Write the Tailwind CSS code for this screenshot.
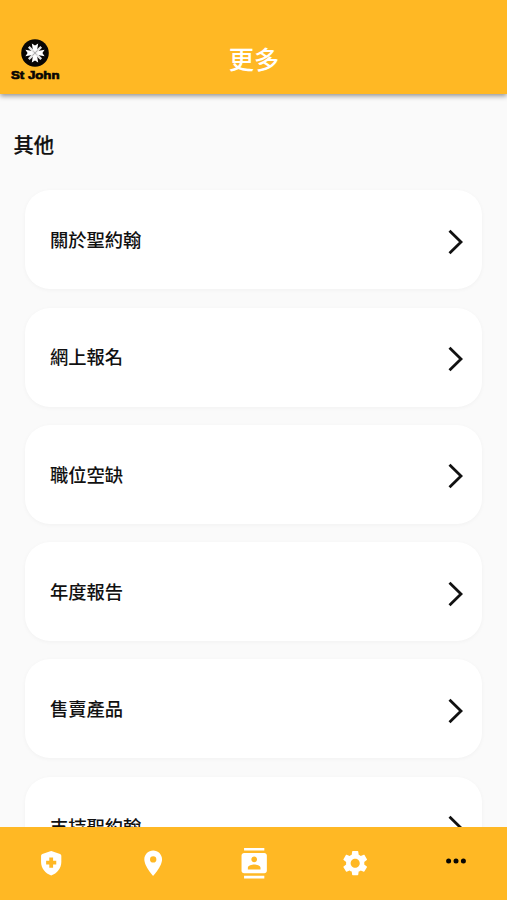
<!DOCTYPE html>
<html lang="zh-Hant">
<head>
<meta charset="utf-8">
<title>更多</title>
<script src="https://cdn.jsdelivr.net/npm/@tailwindcss/browser@4"></script>
</head>
<body class="h-[900px] w-[507px] overflow-hidden bg-[#fafafa] font-['Noto_Sans_CJK_TC',sans-serif] text-[#111]">
<div class="flex h-full flex-col">
  <header class="relative z-10 grid h-[94px] shrink-0 grid-cols-[70px_1fr_70px] bg-[#ffb824] pt-[37px] shadow-[0_2px_5px_rgba(0,0,0,0.42)]">
    <div class="flex flex-col items-center">
      <svg class="mt-0.5 size-7" viewBox="0 0 28 28">
        <circle cx="14" cy="14" r="13.8" fill="#080604"/>
        <g fill="#fff">
          <path id="arm" d="M12.4 14 10.8 4.4 14 6.6 17.2 4.4 15.6 14Z"/>
          <use href="#arm" transform="rotate(90 14 14)"/>
          <use href="#arm" transform="rotate(180 14 14)"/>
          <use href="#arm" transform="rotate(270 14 14)"/>
        </g>
        <path d="M7.8 7.8 20.2 20.2M20.2 7.8 7.8 20.2" stroke="#e6e6e6" stroke-width="2.4"/>
        <path d="M11.5 16.5l5-5M12.5 12.5l3 3" stroke="#999" stroke-width=".7"/>
      </svg>
      <svg class="h-[13px] w-[52px]" viewBox="0 0 52 13"><text x="2" y="11.8" font-family="Liberation Sans" font-weight="700" font-size="11.5" textLength="48.5" lengthAdjust="spacingAndGlyphs" fill="#080604" stroke="#080604" stroke-width=".7">St John</text></svg>
    </div>
    <h1 class="pl-px text-center text-[25.3px] leading-[42px] font-medium text-white">更多</h1>
  </header>
  <main class="flex min-h-0 flex-1 flex-col overflow-hidden">
    <h2 class="mt-[30px] ml-[13.5px] h-[66.3px] shrink-0 text-[20.3px] leading-10 font-medium [-webkit-text-stroke:0.2px_#111]">其他</h2>
    <ul class="mr-[25px] ml-[25.3px] flex flex-col gap-[18.3px]">
      <li class="flex h-[99px] shrink-0 items-center justify-between rounded-[25px] bg-white pr-[17.7px] pl-[24.7px] text-[18.3px] font-medium shadow-[0_1px_4px_rgba(0,0,0,0.04)]"><span>關於聖約翰</span><svg class="mt-1 h-[26px] w-4" viewBox="0 0 16 26" fill="none" stroke="#111" stroke-width="2.8"><path d="M1.5 1.8 13 13 1.5 24.2"/></svg></li>
      <li class="flex h-[99px] shrink-0 items-center justify-between rounded-[25px] bg-white pr-[17.7px] pl-[24.7px] text-[18.3px] font-medium shadow-[0_1px_4px_rgba(0,0,0,0.04)]"><span>網上報名</span><svg class="mt-1 h-[26px] w-4" viewBox="0 0 16 26" fill="none" stroke="#111" stroke-width="2.8"><path d="M1.5 1.8 13 13 1.5 24.2"/></svg></li>
      <li class="flex h-[99px] shrink-0 items-center justify-between rounded-[25px] bg-white pr-[17.7px] pl-[24.7px] text-[18.3px] font-medium shadow-[0_1px_4px_rgba(0,0,0,0.04)]"><span>職位空缺</span><svg class="mt-1 h-[26px] w-4" viewBox="0 0 16 26" fill="none" stroke="#111" stroke-width="2.8"><path d="M1.5 1.8 13 13 1.5 24.2"/></svg></li>
      <li class="flex h-[99px] shrink-0 items-center justify-between rounded-[25px] bg-white pr-[17.7px] pl-[24.7px] text-[18.3px] font-medium shadow-[0_1px_4px_rgba(0,0,0,0.04)]"><span>年度報告</span><svg class="mt-1 h-[26px] w-4" viewBox="0 0 16 26" fill="none" stroke="#111" stroke-width="2.8"><path d="M1.5 1.8 13 13 1.5 24.2"/></svg></li>
      <li class="flex h-[99px] shrink-0 items-center justify-between rounded-[25px] bg-white pr-[17.7px] pl-[24.7px] text-[18.3px] font-medium shadow-[0_1px_4px_rgba(0,0,0,0.04)]"><span>售賣產品</span><svg class="mt-1 h-[26px] w-4" viewBox="0 0 16 26" fill="none" stroke="#111" stroke-width="2.8"><path d="M1.5 1.8 13 13 1.5 24.2"/></svg></li>
      <li class="flex h-[99px] shrink-0 items-center justify-between rounded-[25px] bg-white pr-[17.7px] pl-[24.7px] text-[18.3px] font-medium shadow-[0_1px_4px_rgba(0,0,0,0.04)]"><span>支持聖約翰</span><svg class="mt-1 h-[26px] w-4" viewBox="0 0 16 26" fill="none" stroke="#111" stroke-width="2.8"><path d="M1.5 1.8 13 13 1.5 24.2"/></svg></li>
    </ul>
  </main>
  <nav class="grid h-[73px] shrink-0 grid-cols-5 items-center justify-items-center bg-[#ffb824] pl-px text-white">
    <svg class="size-[30.4px]" viewBox="0 0 24 24" fill="currentColor"><path fill-rule="evenodd" d="M11.3 2.5 5 4.7Q4 5.1 4 6.2v4.9c0 4.9 3.4 9.2 8 10.6 4.6-1.4 8-5.7 8-10.6V6.2q0-1.1-1-1.5l-6.3-2.2a2 2 0 0 0-1.4 0ZM10.5 7.5h3V10H16v3h-2.5v2.5h-3V13H8v-3h2.5Z"/></svg>
    <svg class="size-[30.4px]" viewBox="0 0 24 24" fill="currentColor"><path d="M12 2C8.13 2 5 5.13 5 9c0 5.25 7 13 7 13s7-7.75 7-13c0-3.87-3.13-7-7-7zm0 9.5a2.5 2.5 0 0 1 0-5 2.5 2.5 0 0 1 0 5z"/></svg>
    <svg class="size-[30.4px]" viewBox="0 0 24 24" fill="currentColor"><path d="M20 0H4v2h16V0zM4 24h16v-2H4v2zM20 4H4c-1.1 0-2 .9-2 2v12c0 1.1.9 2 2 2h16c1.1 0 2-.9 2-2V6c0-1.1-.9-2-2-2zm-8 2.75c1.24 0 2.25 1.01 2.25 2.25s-1.01 2.25-2.25 2.25S9.75 10.24 9.75 9 10.76 6.75 12 6.75zM17 17H7v-1.5c0-1.67 3.33-2.5 5-2.5s5 .83 5 2.5V17z"/></svg>
    <svg class="size-[30.4px]" viewBox="0 0 24 24" fill="currentColor"><path d="M19.14 12.94c.04-.3.06-.61.06-.94 0-.32-.02-.64-.07-.94l2.03-1.58c.18-.14.23-.41.12-.61l-1.92-3.32c-.12-.22-.37-.29-.59-.22l-2.39.96c-.5-.38-1.03-.7-1.62-.94l-.36-2.54c-.04-.24-.24-.41-.48-.41h-3.84c-.24 0-.43.17-.47.41l-.36 2.54c-.59.24-1.13.57-1.62.94l-2.39-.96c-.22-.08-.47 0-.59.22L2.74 8.87c-.12.21-.08.47.12.61l2.03 1.58c-.05.3-.09.63-.09.94s.02.64.07.94l-2.03 1.58c-.18.14-.23.41-.12.61l1.92 3.32c.12.22.37.29.59.22l2.39-.96c.5.38 1.03.7 1.62.94l.36 2.54c.05.24.24.41.48.41h3.84c.24 0 .44-.17.47-.41l.36-2.54c.59-.24 1.13-.56 1.62-.94l2.39.96c.22.08.47 0 .59-.22l1.92-3.32c.12-.22.07-.47-.12-.61l-2.01-1.58zM12 15.6c-1.98 0-3.6-1.62-3.6-3.6s1.62-3.6 3.6-3.6 3.6 1.62 3.6 3.6-1.62 3.6-3.6 3.6z"/></svg>
    <svg class="mb-[5px] h-[6px] w-5" viewBox="0 0 20 6" fill="#080604"><circle cx="2.6" cy="3" r="2.5"/><circle cx="10" cy="3" r="2.5"/><circle cx="17.4" cy="3" r="2.5"/></svg>
  </nav>
</div>
</body>
</html>
